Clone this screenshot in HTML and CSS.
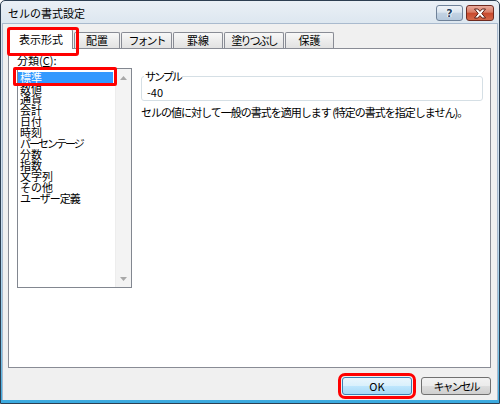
FILE: index.html
```html
<!DOCTYPE html>
<html lang="ja">
<head>
<meta charset="utf-8">
<title>セルの書式設定</title>
<link rel="stylesheet" href="styles.css">
</head>
<body>
<div class="window">
  <div class="titlebar">
    <span class="title">セルの書式設定</span>
    <div class="caption-btns">
      <div class="cbtn help"><span class="q">?</span></div>
      <div class="cbtn close">
        <svg width="14" height="11" viewBox="0 0 14 11"><path d="M1.5 1 H4.8 L7 3.4 L9.2 1 H12.5 L8.8 5.5 L12.5 10 H9.2 L7 7.6 L4.8 10 H1.5 L5.2 5.5 Z" fill="#fff" stroke="#5a1d12" stroke-width="1" stroke-linejoin="round"/></svg>
      </div>
    </div>
  </div>
  <div class="client">
    <div class="tabs">
      <div class="tab active">表示形式</div>
      <div class="tab t2">配置</div>
      <div class="tab t3 kana">フォント</div>
      <div class="tab t4">罫線</div>
      <div class="tab t5 kana">塗りつぶし</div>
      <div class="tab t6">保護</div>
    </div>
    <div class="panel">
      <div class="left">
        <div class="label">分類(<u>C</u>):</div>
        <div class="listbox">
          <ul class="items">
            <li class="sel">標準</li>
            <li>数値</li>
            <li>通貨</li>
            <li>会計</li>
            <li>日付</li>
            <li>時刻</li>
            <li class="kana">パーセンテージ</li>
            <li>分数</li>
            <li>指数</li>
            <li>文字列</li>
            <li>その他</li>
            <li class="kana1">ユーザー定義</li>
          </ul>
          <div class="scrollbar">
            <div class="arrow"><svg width="7" height="4" viewBox="0 0 7 4"><path d="M0 4 L3.5 0 L7 4 Z" fill="#a8a8a8"/></svg></div>
            <div class="arrow"><svg width="7" height="4" viewBox="0 0 7 4"><path d="M0 0 L7 0 L3.5 4 Z" fill="#a8a8a8"/></svg></div>
          </div>
        </div>
      </div>
      <div class="right">
        <fieldset class="sample">
          <legend>サンプル</legend>
          <div class="value">-40</div>
        </fieldset>
        <p class="desc">セルの値に対して一般の書式を適用します (特定の書式を指定しません)。</p>
      </div>
    </div>
    <div class="buttons">
      <button class="btn ok">OK</button>
      <button class="btn kana">キャンセル</button>
    </div>
  </div>
</div>
</body>
</html>
```
FILE: styles.css
```css
* { box-sizing: border-box; }
html, body { margin: 0; padding: 0; }
body {
  width: 500px;
  height: 404px;
  overflow: hidden;
  font-family: "Noto Sans CJK JP", "Noto Sans", sans-serif;
  font-size: 11px;
  color: #000;
  background: #fff;
}
.kana { letter-spacing: -2px; }
.kana1 { letter-spacing: -1px; }
.window {
  width: 500px;
  height: 404px;
  border: 1px solid #2d3f52;
  border-radius: 5px 5px 0 0;
  background: linear-gradient(to bottom, #eaf0f6 0, #dde7f0 22px, #c9dced 55%, #7cc3e6 88%, #3aa9df 100%);
  display: flex;
  flex-direction: column;
  overflow: hidden;
}
.titlebar {
  height: 22px;
  flex: none;
  display: flex;
  justify-content: space-between;
  align-items: flex-start;
  padding: 0 5px 0 7px;
}
.title {
  margin-top: 6px;
  line-height: 12px;
  white-space: nowrap;
}
.caption-btns {
  display: flex;
  gap: 3px;
  margin-top: 4px;
}
.cbtn {
  height: 16px;
  border-radius: 3px;
  display: flex;
  align-items: center;
  justify-content: center;
}
.help {
  width: 27px;
  border: 1px solid #6f8299;
  background: linear-gradient(to bottom, #eef3f8 0, #dbe5ef 45%, #c3d3e3 50%, #b5c8dc 100%);
}
.help .q {
  font-family: "DejaVu Sans", sans-serif;
  font-weight: bold;
  font-size: 11px;
  line-height: 11px;
  color: #24415f;
  text-shadow: 0 0 1px #fff, 1px 0 0 #fff, -1px 0 0 #fff;
}
.close {
  width: 28px;
  border: 1px solid #6e2a1f;
  background: linear-gradient(to bottom, #e9aa9c 0, #d97c65 45%, #c8482c 50%, #d4684a 100%);
}
.close svg { display: block; }
.client {
  flex: 1;
  margin: 0 1px 3px;
  background: #f0f0f0;
  border: 1px solid #a9bace;
  border-bottom: none;
  display: flex;
  flex-direction: column;
}
.tabs {
  height: 24px;
  flex: none;
  display: flex;
  align-items: flex-end;
  gap: 1px;
  padding-left: 6px;
}
.tab {
  height: 16px;
  border: 1px solid #898c95;
  border-bottom: none;
  border-radius: 2px 2px 0 0;
  background: linear-gradient(to bottom, #f8f8f8 0, #ececec 50%, #e2e2e2 100%);
  text-align: center;
  line-height: 15px;
  white-space: nowrap;
}
.t2 { width: 46px; }
.t3 { width: 51px; }
.t4 { width: 50px; }
.t5 { width: 60px; }
.t6 { width: 49px; }
.tab.active {
  position: relative;
  z-index: 1;
  width: 64px;
  height: 20px;
  margin-bottom: -1px;
  background: #fff;
  line-height: 18px;
}
.tab.active::after {
  content: "";
  position: absolute;
  left: -3px;
  top: -3px;
  width: 66px;
  height: 23px;
  border: 3px solid #f00;
  border-radius: 3px;
}
.panel {
  height: 320px;
  flex: none;
  margin: 0 6px 0 5px;
  border: 1px solid #898c95;
  background: #fff;
  display: flex;
}
.left {
  padding: 5px 0 0 8px;
}
.label {
  line-height: 12px;
  margin-bottom: 2px;
}
.listbox {
  width: 115px;
  height: 220px;
  border: 1px solid #828790;
  display: flex;
}
.items {
  list-style: none;
  margin: 0;
  padding: 3px 2px 0 0;
  flex: 1;
}
.items li {
  line-height: 11px;
  height: 11px;
  padding-left: 2px;
  white-space: nowrap;
}
.items li.sel {
  position: relative;
  background: #3399ff;
  color: #fff;
}
.items li.sel::after {
  content: "";
  position: absolute;
  left: -5px;
  top: -5px;
  right: -4px;
  bottom: -3px;
  border: 3px solid #f00;
  border-radius: 2px;
}
.scrollbar {
  width: 16px;
  background: #f3f3f3;
  border-left: 1px solid #ededed;
  display: flex;
  flex-direction: column;
  justify-content: space-between;
}
.arrow {
  height: 17px;
  display: flex;
  align-items: center;
  justify-content: center;
}
.arrow svg { display: block; }
.right {
  flex: 1;
  padding: 20px 7px 0 9px;
}
.sample {
  margin: 0;
  padding: 3px 5px 1px;
  border: 1px solid #d5dfe5;
  border-radius: 3px;
  min-width: 0;
}
.sample legend {
  padding: 0 1px;
  margin-left: -3px;
  line-height: 14px;
  letter-spacing: -2px;
}
.value {
  line-height: 13px;
}
.desc {
  margin: 5px 0 0;
  line-height: 12px;
  white-space: nowrap;
  letter-spacing: -1px;
}
.buttons {
  height: 18px;
  flex: none;
  margin-top: 9px;
  display: flex;
  justify-content: flex-end;
  gap: 9px;
  padding-right: 6px;
}
.btn {
  width: 70px;
  height: 18px;
  padding: 0;
  font-family: inherit;
  font-size: 11px;
  line-height: 14px;
  color: #000;
  border: 1px solid #707070;
  border-radius: 3px;
  background: linear-gradient(to bottom, #f2f2f2 0, #ebebeb 50%, #dddddd 50%, #cfcfcf 100%);
}
.btn.ok {
  border-color: #3c7fb1;
  background: linear-gradient(to bottom, #eaf6fd 0, #d9f0fc 50%, #bee6fd 50%, #a7d9f5 100%);
  outline: 3px solid #f00;
  outline-offset: 1px;
}
```
